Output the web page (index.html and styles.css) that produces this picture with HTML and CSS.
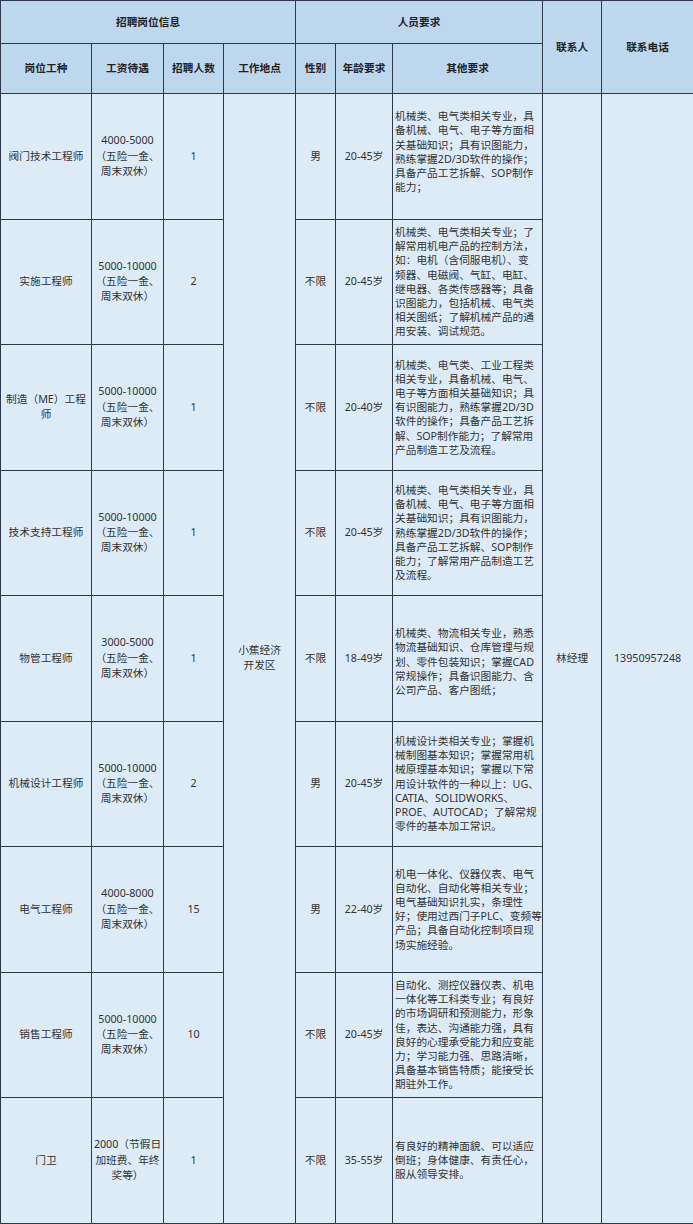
FILE: index.html
```html
<!DOCTYPE html>
<html lang="zh-CN">
<head>
<meta charset="utf-8">
<title>招聘岗位信息</title>
<link rel="stylesheet" href="styles.css">
</head>
<body>
<table class="jobs">
  <colgroup>
    <col class="c1"><col class="c2"><col class="c3"><col class="c4"><col class="c5"><col class="c6"><col class="c7"><col class="c8"><col class="c9">
  </colgroup>
  <thead>
    <tr class="h1">
      <th colspan="4">招聘岗位信息</th>
      <th colspan="3">人员要求</th>
      <th rowspan="2">联系人</th>
      <th rowspan="2">联系电话</th>
    </tr>
    <tr class="h2">
      <th>岗位工种</th>
      <th>工资待遇</th>
      <th>招聘人数</th>
      <th>工作地点</th>
      <th>性别</th>
      <th>年龄要求</th>
      <th>其他要求</th>
    </tr>
  </thead>
  <tbody>
    <tr>
      <td>阀门技术工程师</td>
      <td class="pay">4000-5000<br>（五险一金、<br>周末双休）</td>
      <td>1</td>
      <td rowspan="9">小蕉经济<br>开发区</td>
      <td>男</td>
      <td>20-45岁</td>
      <td class="other up">机械类、电气类相关专业，具<br>备机械、电气、电子等方面相<br>关基础知识；具有识图能力，<br>熟练掌握2D/3D软件的操作；<br>具备产品工艺拆解、SOP制作<br>能力；</td>
      <td rowspan="9">林经理</td>
      <td rowspan="9">13950957248</td>
    </tr>
    <tr>
      <td>实施工程师</td>
      <td class="pay">5000-10000<br>（五险一金、<br>周末双休）</td>
      <td>2</td>
      <td>不限</td>
      <td>20-45岁</td>
      <td class="other">机械类、电气类相关专业；了<br>解常用机电产品的控制方法，<br>如：电机（含伺服电机）、变<br>频器、电磁阀、气缸、电缸、<br>继电器、各类传感器等；具备<br>识图能力，包括机械、电气类<br>相关图纸；了解机械产品的通<br>用安装、调试规范。</td>
    </tr>
    <tr>
      <td>制造（ME）工程<br>师</td>
      <td class="pay">5000-10000<br>（五险一金、<br>周末双休）</td>
      <td>1</td>
      <td>不限</td>
      <td>20-40岁</td>
      <td class="other">机械类、电气类、工业工程类<br>相关专业，具备机械、电气、<br>电子等方面相关基础知识；具<br>有识图能力，熟练掌握2D/3D<br>软件的操作；具备产品工艺拆<br>解、SOP制作能力；了解常用<br>产品制造工艺及流程。</td>
    </tr>
    <tr>
      <td>技术支持工程师</td>
      <td class="pay">5000-10000<br>（五险一金、<br>周末双休）</td>
      <td>1</td>
      <td>不限</td>
      <td>20-45岁</td>
      <td class="other">机械类、电气类相关专业，具<br>备机械、电气、电子等方面相<br>关基础知识；具有识图能力，<br>熟练掌握2D/3D软件的操作；<br>具备产品工艺拆解、SOP制作<br>能力；了解常用产品制造工艺<br>及流程。</td>
    </tr>
    <tr>
      <td>物管工程师</td>
      <td class="pay">3000-5000<br>（五险一金、<br>周末双休）</td>
      <td>1</td>
      <td>不限</td>
      <td>18-49岁</td>
      <td class="other down">机械类、物流相关专业，熟悉<br>物流基础知识、仓库管理与规<br>划、零件包装知识；掌握CAD<br>常规操作；具备识图能力、含<br>公司产品、客户图纸；</td>
    </tr>
    <tr>
      <td>机械设计工程师</td>
      <td class="pay">5000-10000<br>（五险一金、<br>周末双休）</td>
      <td>2</td>
      <td>男</td>
      <td>20-45岁</td>
      <td class="other">机械设计类相关专业；掌握机<br>械制图基本知识；掌握常用机<br>械原理基本知识；掌握以下常<br>用设计软件的一种以上：UG、<br>CATIA、SOLIDWORKS、<br>PROE、AUTOCAD；了解常规<br>零件的基本加工常识。</td>
    </tr>
    <tr>
      <td>电气工程师</td>
      <td class="pay">4000-8000<br>（五险一金、<br>周末双休）</td>
      <td>15</td>
      <td>男</td>
      <td>22-40岁</td>
      <td class="other">机电一体化、仪器仪表、电气<br>自动化、自动化等相关专业；<br>电气基础知识扎实，条理性<br>好；使用过西门子PLC、变频等<br>产品；具备自动化控制项目现<br>场实施经验。</td>
    </tr>
    <tr>
      <td>销售工程师</td>
      <td class="pay">5000-10000<br>（五险一金、<br>周末双休）</td>
      <td>10</td>
      <td>不限</td>
      <td>20-45岁</td>
      <td class="other">自动化、测控仪器仪表、机电<br>一体化等工科类专业；有良好<br>的市场调研和预测能力，形象<br>佳，表达、沟通能力强，具有<br>良好的心理承受能力和应变能<br>力；学习能力强、思路清晰，<br>具备基本销售特质；能接受长<br>期驻外工作。</td>
    </tr>
    <tr>
      <td>门卫</td>
      <td class="pay">2000（节假日<br>加班费、年终<br>奖等）</td>
      <td>1</td>
      <td>不限</td>
      <td>35-55岁</td>
      <td class="other">有良好的精神面貌、可以适应<br>倒班；身体健康、有责任心，<br>服从领导安排。</td>
    </tr>
  </tbody>
</table>
</body>
</html>
```

FILE: styles.css
```css
html, body {
  margin: 0;
  padding: 0;
  background: #ffffff;
}

.jobs {
  border-collapse: collapse;
  table-layout: fixed;
  width: 693px;
  font-family: "Noto Sans", "Noto Sans CJK SC", sans-serif;
  font-size: 10.7px;
  color: #333333;
}

.c1 { width: 91px; }
.c2 { width: 72px; }
.c3 { width: 60px; }
.c4 { width: 72px; }
.c5 { width: 40px; }
.c6 { width: 57px; }
.c7 { width: 150px; }
.c8 { width: 59px; }
.c9 { width: 92px; }

.jobs th,
.jobs td {
  border: 1px solid #2c3a4b;
  padding: 0;
  text-align: center;
  vertical-align: middle;
  white-space: nowrap;
  overflow: hidden;
}

.jobs th {
  background: #bdd7ee;
  font-weight: bold;
  color: #222222;
  line-height: 15px;
}

.jobs td {
  background: #ddebf7;
  line-height: 15.3px;
}

.h1 { height: 43px; }
.h2 { height: 50px; }
.jobs tbody tr { height: 125.5px; }

.jobs td.other {
  text-align: left;
  padding-left: 2px;
  line-height: 14.2px;
}

.jobs td.up { padding-bottom: 9px; }
.jobs td.down { padding-top: 7px; }
```
